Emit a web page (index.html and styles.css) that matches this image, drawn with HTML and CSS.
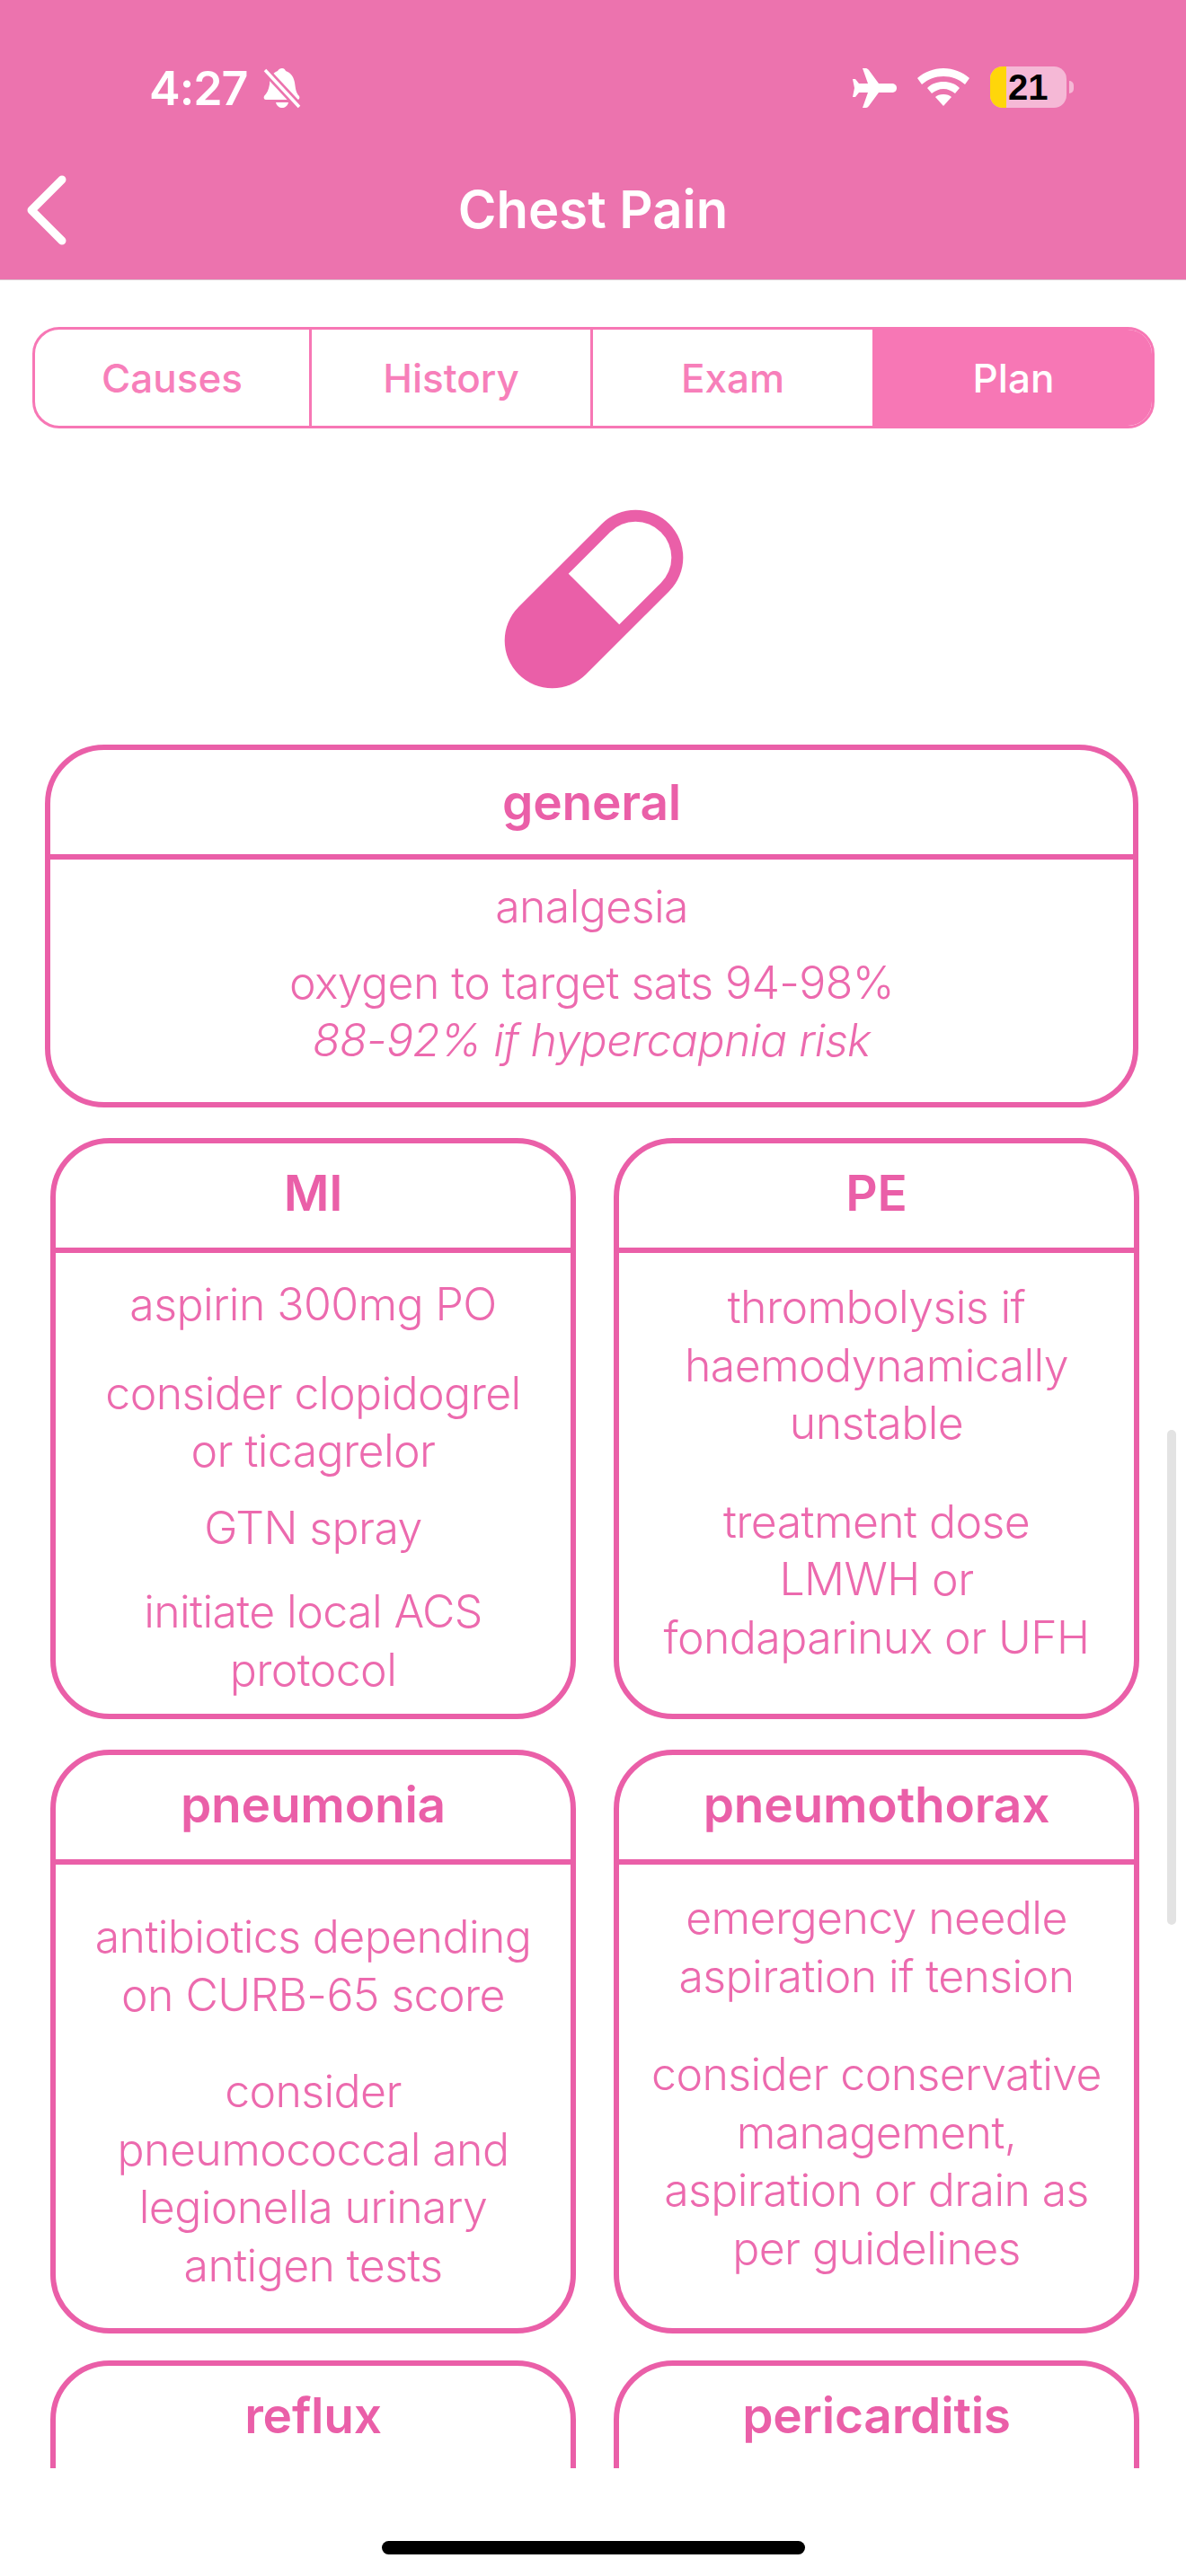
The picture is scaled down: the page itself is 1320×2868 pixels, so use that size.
FILE: index.html
```html
<!DOCTYPE html>
<html lang="en">
<head>
<meta charset="utf-8">
<title>Chest Pain</title>
<link rel="stylesheet" href="styles.css">
</head>
<body>
<div class="app">
  <header class="header">
    <div class="status">
      <div class="status-left">
        <span class="time">4:27</span>
        <svg class="bell" viewBox="0 0 42 46" aria-hidden="true">
          <path fill="#fff" d="M21 1c2 0 3 1 4 3 6 2 9 7 10 13 1 6 1 11 5 15 1 2 0 4-2 4H3c-2 0-3-2-2-4 3-3 5-7 6-13 0-7 3-13 9-15 1-2 3-3 5-3z"/>
          <path fill="#fff" d="M14 39h14c-1 4-4 6-7 6s-6-2-7-6z"/>
          <path fill="none" stroke="#ec73ae" stroke-width="9" d="M0 1L42 46"/>
          <path fill="none" stroke="#fff" stroke-width="3.5" d="M2 3L40 44"/>
        </svg>
      </div>
      <div class="status-right">
        <svg class="plane" viewBox="0 0 50 44" aria-hidden="true">
          <path fill="#fff" d="M12 0h4c1 0 2 1 3 2l11 15h14c4 0 6 2 6 5s-2 5-6 5H30L19 42c-1 1-2 2-3 2h-4l6-17H8l-4 5H1l2-10-2-10h3l4 5h10z"/>
        </svg>
        <svg class="wifi" viewBox="0 0 58 42" aria-hidden="true">
          <path fill="#fff" d="M29 0c11 0 21 4 29 11l-5 7C46 12 38 9 29 9s-17 3-24 9l-5-7C8 4 18 0 29 0z"/>
          <path fill="#fff" d="M29 15c7 0 13 2 18 7l-5 6c-4-3-8-5-13-5s-9 2-13 5l-5-6c5-5 11-7 18-7z"/>
          <path fill="#fff" d="M29 29c4 0 7 1 9 3L29 42l-9-10c2-2 5-3 9-3z"/>
        </svg>
        <div class="battery">
          <div class="battery-body">
            <span class="battery-fill"></span>
            <span class="battery-num">21</span>
          </div>
          <span class="battery-nub"></span>
        </div>
      </div>
    </div>
    <div class="navbar">
      <svg class="back" viewBox="0 0 50 80" aria-hidden="true">
        <path fill="none" stroke="#fff" stroke-width="9" stroke-linecap="round" stroke-linejoin="round" d="M41 6L7 40l34 34"/>
      </svg>
      <h1 class="title">Chest Pain</h1>
    </div>
  </header>

  <main class="main">
    <nav class="tabs">
      <a class="tab">Causes</a>
      <a class="tab">History</a>
      <a class="tab">Exam</a>
      <a class="tab tab-active">Plan</a>
    </nav>

    <div class="pill-wrap">
      <svg class="pill" viewBox="0 0 200 200" aria-hidden="true">
        <g transform="rotate(-45 100 100)" >
          <g transform="translate(100 100)">
            <rect x="-118.5" y="-53" width="237" height="106" rx="53" fill="#ea5fa8"/>
            <path d="M0-40H65.5a40 40 0 0 1 0 80H0z" fill="#fff"/>
          </g>
        </g>
      </svg>
    </div>

    <section class="card card-wide">
      <h2 class="card-head">general</h2>
      <div class="card-body pad-general">
        <p class="item">analgesia</p>
        <p class="item gap-20">oxygen to target sats 94-98%<br><em>88-92% if hypercapnia risk</em></p>
      </div>
    </section>

    <div class="grid">
      <section class="card card-short">
        <h2 class="card-head">MI</h2>
        <div class="card-body pad-mi">
          <p class="item">aspirin 300mg PO</p>
          <p class="item gap-34">consider clopidogrel<br>or ticagrelor</p>
          <p class="item gap-21">GTN spray</p>
          <p class="item gap-29">initiate local ACS<br>protocol</p>
        </div>
      </section>
      <section class="card card-short">
        <h2 class="card-head">PE</h2>
        <div class="card-body pad-pe">
          <p class="item">thrombolysis if<br>haemodynamically<br>unstable</p>
          <p class="item gap-45">treatment dose<br>LMWH or<br>fondaparinux or UFH</p>
        </div>
      </section>
      <section class="card">
        <h2 class="card-head">pneumonia</h2>
        <div class="card-body pad-pneumonia">
          <p class="item">antibiotics depending<br>on CURB-65 score</p>
          <p class="item gap-43">consider<br>pneumococcal and<br>legionella urinary<br>antigen tests</p>
        </div>
      </section>
      <section class="card">
        <h2 class="card-head">pneumothorax</h2>
        <div class="card-body pad-pt">
          <p class="item">emergency needle<br>aspiration if tension</p>
          <p class="item gap-45">consider conservative<br>management,<br>aspiration or drain as<br>per guidelines</p>
        </div>
      </section>
      <section class="card">
        <h2 class="card-head">reflux</h2>
      </section>
      <section class="card">
        <h2 class="card-head">pericarditis</h2>
      </section>
    </div>
    <span class="scrollbar"></span>
  </main>

  <footer class="home">
    <span class="home-bar"></span>
  </footer>
</div>
</body>
</html>
```

FILE: styles.css
```css
* { box-sizing: border-box; }
html, body { margin: 0; padding: 0; background: #fff; }
.app {
  width: 1320px;
  height: 2868px;
  display: flex;
  flex-direction: column;
  overflow: hidden;
  font-family: Inter, "Liberation Sans", sans-serif;
}
.header {
  height: 312px;
  flex: none;
  background: #ec73ae;
  border-bottom: 1px solid #d9c3ce;
  display: flex;
  flex-direction: column;
}
.status {
  height: 170px;
  padding: 74px 125px 0 166px;
  display: flex;
  justify-content: space-between;
  align-items: flex-start;
}
.status-left { display: flex; align-items: flex-start; gap: 17px; }
.time {
  font-weight: 600;
  font-size: 52px;
  line-height: 50px;
  color: #fff;
  letter-spacing: -1px;
}
.bell { width: 42px; height: 46px; margin-top: 1px; }
.status-right { display: flex; align-items: flex-start; }
.plane { width: 50px; height: 44px; margin-top: 2px; margin-right: 23px; }
.wifi { width: 58px; height: 42px; margin-top: 2px; margin-right: 23px; }
.battery { display: flex; align-items: center; height: 46px; }
.battery-body {
  position: relative;
  width: 85px;
  height: 46px;
  border-radius: 14px;
  background: #f5b8d6;
  overflow: hidden;
  display: flex;
  align-items: center;
  padding-left: 20px;
}
.battery-fill { position: absolute; left: 0; top: 0; bottom: 0; width: 18px; background: #ffd60a; }
.battery-num {
  position: relative;
  font-family: "Liberation Sans", sans-serif;
  font-weight: 700;
  font-size: 40px;
  line-height: 46px;
  color: #000;
}
.battery-nub { width: 5px; height: 14px; margin-left: 3px; border-radius: 0 5px 5px 0; background: #f5b8d6; }
.navbar {
  flex: 1;
  position: relative;
  display: flex;
  justify-content: center;
  align-items: flex-start;
}
.back { position: absolute; left: 28px; top: 24px; width: 50px; height: 80px; }
.title {
  margin: 28px 0 0;
  font-weight: 600;
  font-size: 58px;
  line-height: 70px;
  color: #fff;
}
.main {
  position: relative;
  height: 2436px;
  flex: none;
  overflow: hidden;
  padding-top: 52px;
}
.tabs {
  width: 1249px;
  height: 113px;
  margin-left: 36px;
  border: 3px solid #f777b5;
  border-radius: 30px;
  display: grid;
  grid-template-columns: 308px 313px 314px 1fr;
  overflow: hidden;
}
.tab {
  display: flex;
  align-items: center;
  justify-content: center;
  font-weight: 500;
  font-size: 44px;
  color: #f77fba;
  border-right: 3px solid #f777b5;
}
.tab-active { background: #f777b5; color: #fff; border-right: 0; }
.pill-wrap { display: flex; justify-content: center; margin-top: 90px; height: 200px; padding-left: 2px; }
.pill { width: 200px; height: 200px; }
.card {
  border: 6px solid #ea5fa8;
  border-radius: 66px;
  overflow: hidden;
  background: #fff;
}
.card-wide { width: 1217px; height: 404px; margin: 62px 0 0 50px; }
.card-short { height: 647px; }
.card-head {
  margin: 0;
  height: 122px;
  border-bottom: 6px solid #ea5fa8;
  display: flex;
  align-items: center;
  justify-content: center;
  font-weight: 600;
  font-size: 55px;
  letter-spacing: -0.2px;
  color: #ea5fa8;
}
.grid .card-head { padding-bottom: 7px; }
.card-body { text-align: center; }
.item {
  margin: 0;
  font-weight: 300;
  font-size: 50px;
  letter-spacing: -0.6px;
  line-height: 64.5px;
  color: #ec6aae;
}
.pad-general { padding-top: 20px; }
.pad-mi { padding-top: 25px; }
.pad-pe { padding-top: 28px; }
.pad-pt { padding-top: 27px; }
.pad-pneumonia { padding-top: 48px; }
.gap-20 { margin-top: 20px; }
.gap-21 { margin-top: 21px; }
.gap-29 { margin-top: 29px; }
.gap-34 { margin-top: 34px; }
.gap-43 { margin-top: 43px; }
.gap-45 { margin-top: 45px; }
.grid {
  margin: 34px 0 0 56px;
  display: grid;
  grid-template-columns: 585px 585px;
  grid-template-rows: 651px 650px 650px;
  column-gap: 42px;
  row-gap: 30px;
}
.scrollbar {
  position: absolute;
  left: 1299px;
  top: 1280px;
  width: 10px;
  height: 551px;
  border-radius: 5px;
  background: #e3e3e3;
}
.home {
  flex: 1;
  display: flex;
  justify-content: center;
  padding-top: 81px;
}
.home-bar { width: 471px; height: 15px; border-radius: 8px; background: #000; }
```
